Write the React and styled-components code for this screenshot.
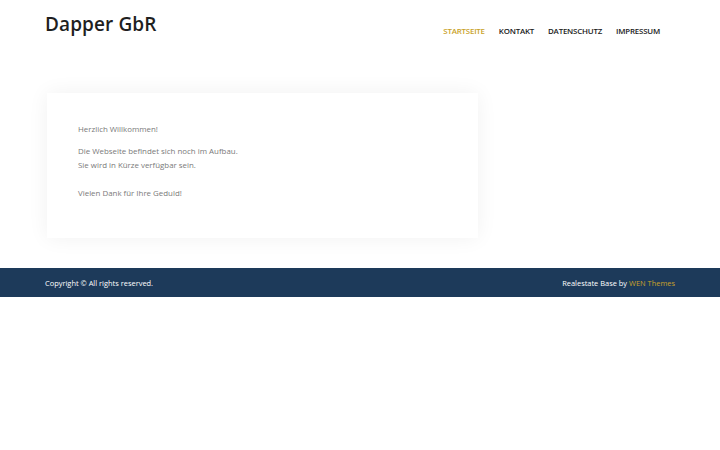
import React from "react";
import styled, { createGlobalStyle } from "styled-components";

const Global = createGlobalStyle`
  html, body { margin: 0; padding: 0; background: #fff; }
  body { font-family: "Open Sans", "Noto Sans", sans-serif; }
  * { box-sizing: border-box; }
`;

const Header = styled.header`
  display: flex;
  justify-content: space-between;
  align-items: flex-start;
  padding: 10px 60px 0 45px;
  height: 93px;
`;

const Title = styled.h1`
  margin: 0;
  font-size: 19px;
  font-weight: 600;
  color: #1f1f1f;
  letter-spacing: 0.1px;
  line-height: 28px;
`;

const Nav = styled.nav`
  display: flex;
  gap: 14px;
  margin-top: 15px;
`;

const NavItem = styled.a`
  font-size: 7.9px;
  font-weight: 600;
  letter-spacing: -0.2px;
  text-transform: uppercase;
  color: ${(p) => (p.$active ? "#c9a22a" : "#1a1a1a")};
  text-decoration: none;
  line-height: 12px;
`;

const Card = styled.section`
  margin: 0 242px 30px 47px;
  background: #fff;
  box-shadow: 0 0 20px rgba(0, 0, 0, 0.06);
  padding: 29px 31px 37px;
  height: 145px;
`;

const P = styled.p`
  margin: 0 0 ${(p) => p.$mb || 0}px;
  font-size: 7.9px;
  color: #7a7a7a;
  line-height: 14px;
`;

const Footer = styled.footer`
  background: #1d3a5a;
  height: 29px;
  display: flex;
  justify-content: space-between;
  align-items: center;
  padding: 0 45px;
  font-size: 7.45px;
  color: #fff;
`;

const Link = styled.span`
  color: #c9a22a;
`;

export default function App() {
  return (
    <>
      <Global />
      <Header>
        <Title>Dapper GbR</Title>
        <Nav>
          <NavItem $active>Startseite</NavItem>
          <NavItem>Kontakt</NavItem>
          <NavItem>Datenschutz</NavItem>
          <NavItem>Impressum</NavItem>
        </Nav>
      </Header>
      <Card>
        <P $mb={8}>Herzlich Willkommen!</P>
        <P>Die Webseite befindet sich noch im Aufbau.</P>
        <P $mb={14}>Sie wird in Kürze verfügbar sein.</P>
        <P>Vielen Dank für Ihre Geduld!</P>
      </Card>
      <Footer>
        <span>Copyright © All rights reserved.</span>
        <span>
          Realestate Base by <Link>WEN Themes</Link>
        </span>
      </Footer>
    </>
  );
}
